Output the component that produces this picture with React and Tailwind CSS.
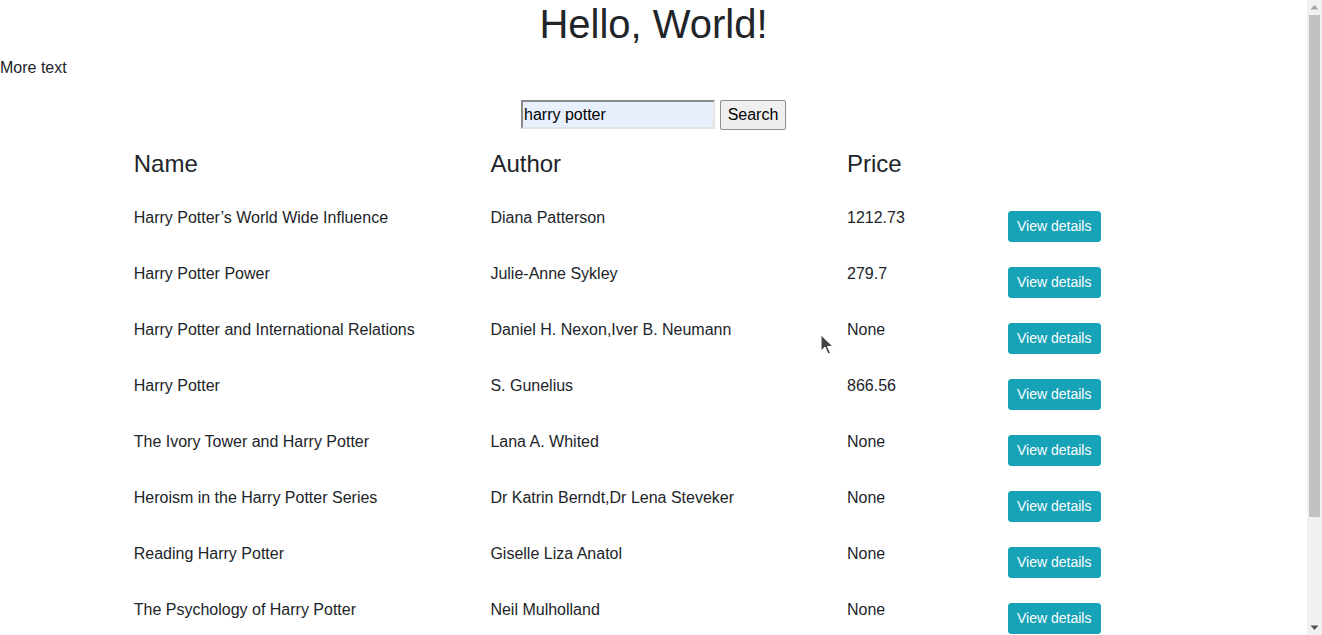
import React from "react";

const books = [
  ["Harry Potter\u2019s World Wide Influence", "Diana Patterson", "1212.73"],
  ["Harry Potter Power", "Julie-Anne Sykley", "279.7"],
  ["Harry Potter and International Relations", "Daniel H. Nexon,Iver B. Neumann", "None"],
  ["Harry Potter", "S. Gunelius", "866.56"],
  ["The Ivory Tower and Harry Potter", "Lana A. Whited", "None"],
  ["Heroism in the Harry Potter Series", "Dr Katrin Berndt,Dr Lena Steveker", "None"],
  ["Reading Harry Potter", "Giselle Liza Anatol", "None"],
  ["The Psychology of Harry Potter", "Neil Mulholland", "None"],
];

export default function App() {
  return (
    <div
      className="relative flex h-[635px] overflow-hidden bg-white text-[#212529] text-base"
      style={{ fontFamily: '"Liberation Sans", Arial, sans-serif' }}
    >
      <main className="flex-1 min-w-0">
        <h1 className="m-0 text-center text-[40px] leading-[48px] font-normal">Hello, World!</h1>
        <p className="mt-2 leading-6">More text</p>
        <form className="mt-5 flex justify-center gap-[5px]" onSubmit={(e) => e.preventDefault()}>
          <input
            type="text"
            defaultValue="harry potter"
            className="w-[194px] h-[29px] bg-[#e8f0fe] text-black text-base leading-5 pl-[1px] border-2 border-t-[#8a8a8a] border-l-[#8a8a8a] border-b-[#e3e3e3] border-r-[#e3e3e3] outline-none"
            style={{ fontFamily: '"Liberation Sans", Arial, sans-serif' }}
          />
          <button
            type="submit"
            className="w-[66px] h-[30px] bg-[#efefef] border border-[#8f8f8f] rounded-[2px] text-black text-base leading-5"
            style={{ fontFamily: '"Liberation Sans", Arial, sans-serif' }}
          >
            Search
          </button>
        </form>
        <div className="w-[80%] mx-auto px-[3px] mt-[19px]">
          <div className="grid grid-cols-[356.7px_356.6px_160.7px_1fr] h-[50px]">
            <div className="text-2xl leading-[29px]">Name</div>
            <div className="text-2xl leading-[29px]">Author</div>
            <div className="text-2xl leading-[29px]">Price</div>
            <div></div>
          </div>
          {books.map(([name, author, price], i) => (
            <div key={i} className="grid grid-cols-[356.7px_356.6px_160.7px_1fr] h-[56px]">
              <div className="pt-[7px] leading-6">{name}</div>
              <div className="pt-[7px] leading-6">{author}</div>
              <div className="pt-[7px] leading-6">{price}</div>
              <div className="pt-[12px]">
                <button className="w-[93px] h-[31px] bg-[#17a2b8] border border-[#17a2b8] rounded-[3px] text-white text-sm leading-[21px]">
                  View details
                </button>
              </div>
            </div>
          ))}
        </div>
      </main>
      <aside className="w-[15px] shrink-0 h-[635px] bg-[#f1f1f1] flex flex-col items-center">
        <svg width="15" height="15" viewBox="0 0 15 15" className="shrink-0">
          <path d="M3.5 9.5 L7.5 5 L11.5 9.5 Z" fill="#a3a3a3" />
        </svg>
        <div className="w-[11px] h-[502px] bg-[#c1c1c1]"></div>
        <div className="flex-1"></div>
        <svg width="15" height="15" viewBox="0 0 15 15" className="shrink-0">
          <path d="M3.5 5.5 L7.5 10 L11.5 5.5 Z" fill="#505050" />
        </svg>
      </aside>
      <svg
        className="absolute left-[820px] top-[334px] pointer-events-none"
        width="14"
        height="22"
        viewBox="0 0 14 22"
      >
        <path d="M1 1 L1 17 L5 13 L8 20 L10.5 19 L7.5 12.5 L13 12.5 Z" fill="#444" stroke="#fff" strokeWidth="1" />
      </svg>
    </div>
  );
}
